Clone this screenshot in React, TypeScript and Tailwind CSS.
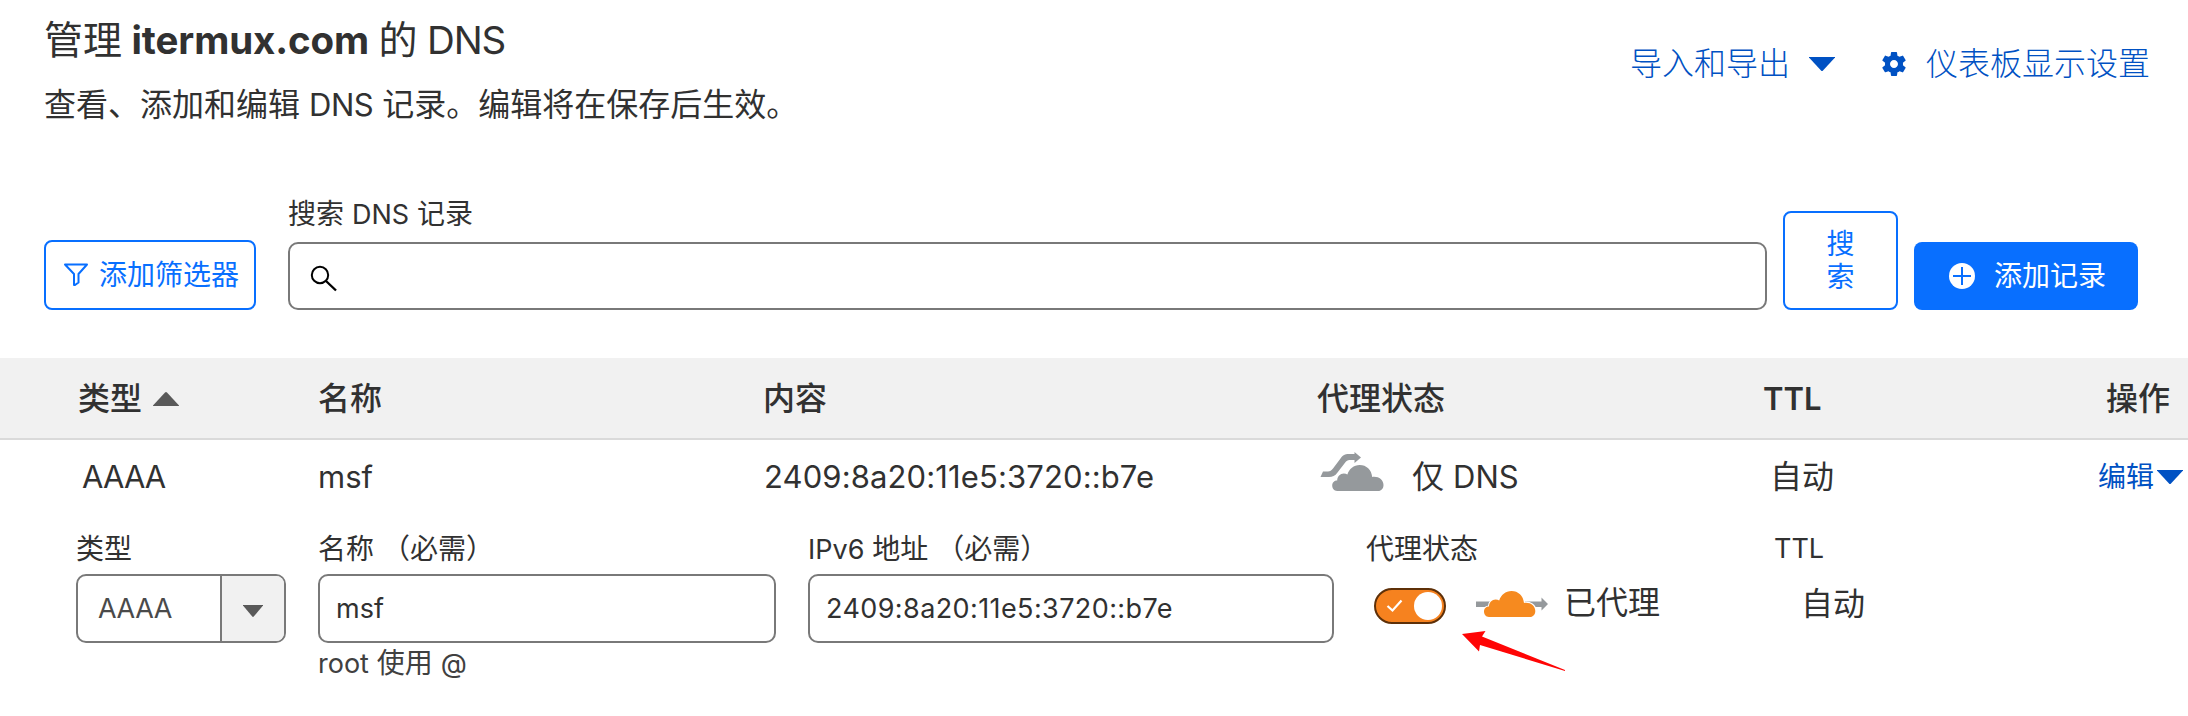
import React from "react";

function Caret({ w, h, up = false, className = "" }: { w: number; h: number; up?: boolean; className?: string }) {
  return (
    <svg width={w} height={h} viewBox="0 0 26 14" preserveAspectRatio="none" className={`block shrink-0 ${className}`}>
      <path
        d={up ? "M12 .6Q13-.4 14 .6L26 13.4V14H0v-.6Z" : "M0 0h26v.6L14 13.4q-1 1-2 0L0 .6Z"}
        fill="currentColor"
      />
    </svg>
  );
}

const CLOUD =
  "M5 26C1.8 26 0 23.6 0 20.6c0-3 2.200-5 5-5C5 11.500 8 8.600 11.600 8.600c1.400 0 2.600.400 3.600 1C16.900 4 21.600 0 27.500 0 34.200 0 39.400 4.900 40 11.900c6-1 11.300 2.700 11.300 8.100 0 3.600-2.300 6-5.300 6Z";

function GreyCloud() {
  return (
    <svg width="64" height="40" viewBox="0 0 64 40" className="block shrink-0">
      <path d="M.5 25 3 19.500H8C10 19.500 11.500 18.500 13 16.500L20.500 6.500C23 3 25 2 28.500 2H34.500V0l6.500 5.500-6.500 5.500V8H29.500c-2 0-3 .8-4.500 2.800L17.500 20.500C15 24 12.500 25 9 25Z" fill="#95999c" />
      <path d={CLOUD} transform="translate(12.200 13)" fill="#95999c" />
    </svg>
  );
}

function OrangeCloud() {
  return (
    <svg width="72" height="28" viewBox="0 0 72 28" className="block shrink-0">
      <path d="M0 11.500h65.500V7.500L72 14l-6.500 6.500V17H0Z" fill="#95999c" />
      <path d={CLOUD} transform="translate(8 1)" fill="#f68a1f" stroke="#fff" strokeWidth="2.400" paintOrder="stroke" />
    </svg>
  );
}

function Gear() {
  return (
    <svg width="30" height="30" viewBox="0 0 24 24" className="block shrink-0">
      <path
        fill="currentColor"
        d="M19.140 12.940c.04-.3.06-.61.06-.94 0-.32-.02-.64-.07-.94l2.030-1.580a.49.49 0 0 0 .12-.61l-1.920-3.320a.488.488 0 0 0-.59-.22l-2.390.96c-.5-.38-1.030-.7-1.620-.94l-.36-2.540a.484.484 0 0 0-.48-.41h-3.840c-.24 0-.43.17-.47.41l-.36 2.540c-.59.24-1.130.57-1.620.94l-2.390-.96c-.22-.08-.47 0-.59.22L2.740 8.870c-.12.21-.08.47.12.61l2.030 1.580c-.05.3-.09.63-.09.94s.02.64.07.94l-2.030 1.580a.49.49 0 0 0-.12.61l1.920 3.320c.12.22.37.29.59.22l2.390-.96c.5.38 1.030.7 1.620.94l.36 2.540c.05.24.24.41.48.41h3.840c.24 0 .44-.17.47-.41l.36-2.540c.59-.24 1.130-.56 1.620-.94l2.390.96c.22.08.47 0 .59-.22l1.920-3.320c.12-.22.07-.47-.12-.61l-2.010-1.580zM12 15.200c-1.770 0-3.200-1.430-3.200-3.200s1.430-3.200 3.200-3.200 3.200 1.430 3.200 3.200-1.430 3.200-3.200 3.200z"
      />
    </svg>
  );
}

function Header() {
  return (
    <header className="flex h-[211px] pl-11">
      <div className="flex-1">
        <h1 className="mt-[18px] h-11 text-[39px] leading-[44px] [word-spacing:-1.5px]">
          管理 <b className="text-[38.5px] font-bold tracking-[-0.1px]">itermux.com</b> 的{" "}
          <span className="text-[38.5px] tracking-[-1.2px]">DNS</span>
        </h1>
        <p className="mt-[23px] h-10 text-[32px] leading-10">
          查看、添加和编辑 <span className="text-[31px] tracking-[-0.5px]">DNS</span> 记录。编辑将在保存后生效。
        </p>
      </div>
      <nav className="mt-11 flex h-10 w-[558px] items-center text-[32px] leading-10 font-light text-[#0051c3]">
        <a className="w-[179px] whitespace-nowrap">导入和导出</a>
        <Caret w={26} h={14} />
        <span className="ml-11">
          <Gear />
        </span>
        <a className="ml-[17px] whitespace-nowrap">仪表板显示设置</a>
      </nav>
    </header>
  );
}

function Toolbar() {
  return (
    <div className="flex h-[99px] items-end pl-11 text-[28px]">
      <button className="flex h-[70px] w-[212px] items-center rounded-lg border-2 border-[#086fff] pl-[17px] text-[#086fff]">
        <svg width="26" height="26" viewBox="0 0 26 26" fill="none" stroke="currentColor" strokeWidth="2" className="block shrink-0">
          <path d="M2 2.500h22L15.500 12v8.500L12 23h-1V12Z" strokeLinejoin="round" />
        </svg>
        <span className="ml-2.5 whitespace-nowrap leading-[34px]">添加筛选器</span>
      </button>
      <div className="ml-8 w-[1479px]">
        <label className="-mt-4 block h-[45px] leading-[34px]">
          搜索 <span className="text-[27px]">DNS</span> 记录
        </label>
        <div className="flex h-[68px] items-center rounded-[10px] border-2 border-[#797979] pl-5">
          <svg width="30" height="30" viewBox="0 0 30 30" fill="none" stroke="#000" strokeWidth="2" className="mt-1.5 block">
            <circle cx="10" cy="11" r="8.200" />
            <path d="m16 17 10 9.500" strokeWidth="2.400" />
          </svg>
        </div>
      </div>
      <button className="ml-4 flex h-[99px] w-[115px] items-center justify-center rounded-lg border-2 border-[#086fff] text-[#086fff]">
        <span className="w-7 leading-[33px]">搜索</span>
      </button>
      <button className="ml-4 flex h-[68px] w-56 items-center rounded-lg bg-[#086fff] pl-[35px] text-white">
        <svg width="26" height="26" viewBox="0 0 26 26" className="block shrink-0">
          <circle cx="13" cy="13" r="13" fill="#fff" />
          <path d="M13 4v18M4 13h18" stroke="#086fff" strokeWidth="2" />
        </svg>
        <span className="ml-[19px] whitespace-nowrap leading-[34px]">添加记录</span>
      </button>
    </div>
  );
}

function TableHead() {
  return (
    <div className="mt-12 flex h-[82px] items-center border-b-2 border-[#dadada] bg-[#f1f1f1] pt-0.5 pl-[78px] text-[32px] leading-10 font-medium">
      <div className="flex w-60 items-center">
        类型
        <Caret w={26} h={14} up className="ml-[11px] text-[#595959]" />
      </div>
      <div className="w-[445px]">名称</div>
      <div className="w-[554px]">内容</div>
      <div className="w-[446px]">代理状态</div>
      <div className="w-[343px] text-[31px] font-semibold">TTL</div>
      <div className="whitespace-nowrap">操作</div>
    </div>
  );
}

function RecordRow() {
  return (
    <div className="flex h-[74px] items-center pl-[82px] text-[32px] leading-10">
      <div className="w-[236px] text-[31px] tracking-[-0.9px]">AAAA</div>
      <div className="w-[446px] text-[31px]">msf</div>
      <div className="w-[556px] text-[31px] tracking-[0.12px]">2409:8a20:11e5:3720::b7e</div>
      <div className="flex w-[450px] items-center">
        <span className="-mt-2.5">
          <GreyCloud />
        </span>
        <span className="ml-7">
          仅 <span className="text-[31px]">DNS</span>
        </span>
      </div>
      <div className="w-[328px]">自动</div>
      <a className="flex items-center text-[28px] whitespace-nowrap text-[#0051c3]">
        编辑
        <Caret w={26} h={14} className="ml-[3px]" />
      </a>
    </div>
  );
}

function EditForm() {
  return (
    <div className="flex pt-[18px] pl-[76px] text-[28px] leading-[34px]">
      <div className="w-[242px]">
        <label className="block h-[42px]">类型</label>
        <div className="flex h-[69px] w-[210px] overflow-hidden rounded-[10px] border-2 border-[#797979]">
          <span className="flex flex-1 items-center pl-5 text-[27px] tracking-[-0.4px] text-[#4a4a4a]">AAAA</span>
          <span className="flex w-[64px] items-center justify-center border-l-2 border-[#797979] bg-[#f1f1f1] text-[#595959]">
            <Caret w={20} h={12} className="mt-1" />
          </span>
        </div>
      </div>
      <div className="w-[490px]">
        <label className="block h-[42px]">名称 （必需）</label>
        <div className="flex h-[69px] w-[458px] items-center rounded-[10px] border-2 border-[#797979] pl-4 text-[27px]">msf</div>
        <p className="mt-[3px] text-[#404040]">
          <span className="text-[27px]">root</span> 使用 <span className="text-[27px]">@</span>
        </p>
      </div>
      <div className="w-[558px]">
        <label className="block h-[42px]">
          <span className="text-[27px]">IPv6</span> 地址 （必需）
        </label>
        <div className="flex h-[69px] w-[526px] items-center rounded-[10px] border-2 border-[#797979] pl-4 text-[27px] tracking-[0.4px]">
          2409:8a20:11e5:3720::b7e
        </div>
      </div>
      <div className="relative w-[408px]">
        <label className="block h-[42px]">代理状态</label>
        <div className="flex h-[60px] items-center pl-2">
          <span className="mt-1 flex h-9 w-[72px] items-center justify-between rounded-full border-2 border-[#5e3008] bg-[#f6821f] pr-0.5 pl-2.5">
            <svg width="17" height="14" viewBox="0 0 17 14" fill="none" stroke="#fff" strokeWidth="2.200" className="block">
              <path d="m1.500 7 5 4.500L15.500 1.500" />
            </svg>
            <span className="size-7 rounded-full bg-white" />
          </span>
          <span className="ml-[30px]">
            <OrangeCloud />
          </span>
          <span className="-mt-[3px] ml-4 text-[32px]">已代理</span>
        </div>
        <svg width="106" height="42" viewBox="0 0 106 42" className="absolute top-[99px] left-[96px]">
          <path d="M0 3 23.500 0 20 5.500 103 39v1L18 14l-1 6.500Z" fill="#ff0505" />
        </svg>
      </div>
      <div>
        <label className="block h-[42px] text-[27px]">TTL</label>
        <p className="mt-[13px] ml-[27px] text-[32px]">自动</p>
      </div>
    </div>
  );
}

export default function App() {
  return (
    <main className="h-[716px] w-[2188px] overflow-hidden bg-white font-[Inter,'Noto_Sans_CJK_SC',sans-serif] text-[#313131]">
      <Header />
      <Toolbar />
      <TableHead />
      <RecordRow />
      <EditForm />
    </main>
  );
}
